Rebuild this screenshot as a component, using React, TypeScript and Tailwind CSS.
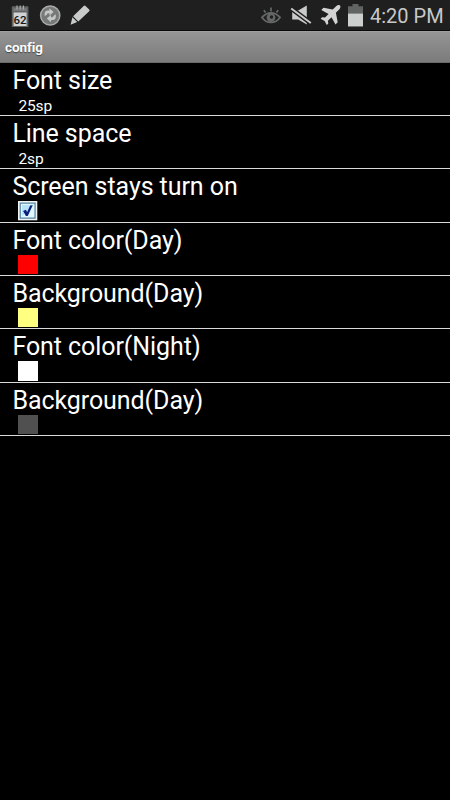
import React from "react";

type Row = { title: string; value?: string; color?: string; checked?: boolean };

const rows: Row[] = [
  { title: "Font size", value: "25sp" },
  { title: "Line space", value: "2sp" },
  { title: "Screen stays turn on", checked: true },
  { title: "Font color(Day)", color: "bg-[#ff0000]" },
  { title: "Background(Day)", color: "bg-[#ffff80]" },
  { title: "Font color(Night)", color: "bg-white" },
  { title: "Background(Day)", color: "bg-[#505050]" },
];

function CalendarIcon() {
  return (
    <svg className="ml-[11px] h-6 w-[18px]" viewBox="0 0 18 24">
      <rect x="0.8" y="3.2" width="16.6" height="22" rx="1" fill="#626464" />
      <path d="M2.6 9.5h13v13.5h-13z" fill="#d2d4d4" />
      <path d="M2.5 5.2h13.4v2.7H2.5z" fill="#77797a" />
      <path d="M6 2.5v4M9.2 2.5v4M12.4 2.5v4" stroke="#a9abab" strokeWidth="1.2" />
      <text x="9.1" y="20.6" textAnchor="middle" fontFamily="Roboto, sans-serif" fontWeight="500" fontSize="11.5" fill="#141616">62</text>
    </svg>
  );
}

function SyncIcon() {
  return (
    <svg className="ml-[10px] h-[22px] w-[22px]" viewBox="0 0 22 22">
      <circle cx="11.2" cy="11.5" r="9.6" fill="#777979" stroke="#aaacac" strokeWidth="1.5" />
      <path d="M5.6 12.2V10q0-3.5 3.4-3.5h1.4V4.2L14.6 8l-4.2 3.5V9.2H9.2Q8 9.2 8 10.5z" fill="#c6c8c8" />
      <path d="M16.8 10.2v2.2q0 3.5-3.4 3.5H12v2.3l-4.2-3.8 4.2-3.5v2.3h1.2q1.2 0 1.2-1.3z" fill="#c6c8c8" />
    </svg>
  );
}

function PencilIcon() {
  return (
    <svg className="ml-[9px] h-[20px] w-[20px]" viewBox="0 0 20 20">
      <path d="M13.7 1q.9-.9 1.8 0l3.7 3.6q.8.8 0 1.6L8.3 16.6 3.1 11.2z" fill="#c9cbcb" />
      <path d="M2.4 12.3l4.8 4.8-6.6 2.6z" fill="#c9cbcb" />
    </svg>
  );
}

function EyeIcon() {
  return (
    <svg className="h-[18px] w-[22px]" viewBox="0 0 22 18">
      <path d="M2 11.4Q6 6.8 11 6.8t9 4.6Q16.5 16.3 11 16.3T2 11.4z" fill="none" stroke="#666868" strokeWidth="1.8" />
      <path d="M5.6 6.6L3.8 4.2M11 5.5V1.4M16.4 6.6l1.8-2.4" stroke="#666868" strokeWidth="1.7" />
      <circle cx="11" cy="11.5" r="4.4" fill="#666868" />
      <circle cx="11.5" cy="11" r="1.7" fill="#1f1f1f" />
    </svg>
  );
}

function MuteIcon() {
  return (
    <svg className="ml-[8px] h-5 w-[22px]" viewBox="0 0 22 20">
      <path d="M2.2 5.6h6L16.8.4v19.2L8.2 14.6h-6z" fill="#c9cbcb" />
      <path d="M0 2.6L22 18.9" stroke="#1f1f1f" strokeWidth="4.8" />
      <path d="M1.2 3.4L20.8 18" stroke="#c9cbcb" strokeWidth="1.9" />
    </svg>
  );
}

function PlaneIcon() {
  return (
    <svg className="ml-[8px] h-5 w-[21px]" viewBox="0 0 21 20">
      <path d="M19.9.5c.9.9.6 2.4-.5 3.7l-3.5 3.6 1.8 9.4-2.2 2.2-4-7.2-3.6 3.5.4 2.7L6.8 20l-2.2-4.1L.6 13.7l1.5-1.5 2.9.3 3.6-3.6-7.3-4 2.2-2.2 9.2 1.9 3.7-3.6C17.6-.1 19.2-.2 19.9.5z" fill="#d2d4d4" />
    </svg>
  );
}

function BatteryIcon() {
  return (
    <svg className="ml-[7px] h-[23px] w-[15px]" viewBox="0 0 15 23">
      <path d="M0 2.3h4.5V0h6v2.3H15v20H0z" fill="#626464" />
      <path d="M0 9.6h15v12.8H0z" fill="#cdcfcf" />
    </svg>
  );
}

function Checkbox() {
  return (
    <svg className="h-[19.3px] w-[19.3px]" viewBox="0 0 20 20">
      <path d="M0 0h20v20H0z" fill="#f0f3f3" />
      <path d="M2.3 2.3h15.4v15.4H2.3z" fill="#e1f7fd" stroke="#5688a4" strokeWidth="1.3" />
      <path d="M4.2 4.2h11.6L4.2 15.8z" fill="#b8e2f8" />
      <path d="M5.3 10.3l2.8-1.2 1.4 2.4 3.1-6.9 2.7-.3-5.2 11.2H8.2z" fill="#08227b" />
    </svg>
  );
}

export default function App() {
  return (
    <main className="flex h-[800px] w-[450px] flex-col overflow-hidden bg-black font-[Roboto,sans-serif] text-white">
      <header className="flex h-[31px] shrink-0 items-center justify-between border-b border-[#080808] bg-[#1f1f1f]">
        <div className="flex items-center">
          <CalendarIcon />
          <SyncIcon />
          <PencilIcon />
        </div>
        <div className="flex items-center pr-[6px]">
          <EyeIcon />
          <MuteIcon />
          <PlaneIcon />
          <BatteryIcon />
          <span className="ml-[7px] w-[74px] whitespace-nowrap pt-[2px] text-[20px] leading-[28px] text-[#c7c9c9]">4:20 PM</span>
        </div>
      </header>
      <div className="flex h-[32px] shrink-0 items-center border-t border-b border-t-[#a0a0a0] border-b-[#696969] bg-linear-to-b from-[#959595] to-[#7b7b7b] pl-[5px]">
        <h1 className="pt-px text-[13.5px] font-bold leading-none tracking-[-0.1px] [text-shadow:0_1px_1px_#444]">config</h1>
      </div>
      <section className="-mt-[0.3px]">
        {rows.map((row, index) => (
          <div key={index} className="h-[53.33px] border-b border-[#d9dbdb] pl-[12.4px]">
            <h2 className="h-[32px] whitespace-nowrap text-[25px] leading-[36px] tracking-[-0.07px]">{row.title}</h2>
            <div className="ml-[6px] flex h-[20px] items-start">
              {row.value && <span className="text-[15.5px] leading-[22px] tracking-[-0.1px]">{row.value}</span>}
              {row.checked && <Checkbox />}
              {row.color && <span className={`h-[19.3px] w-[19.3px] ${row.color}`} />}
            </div>
          </div>
        ))}
      </section>
    </main>
  );
}
